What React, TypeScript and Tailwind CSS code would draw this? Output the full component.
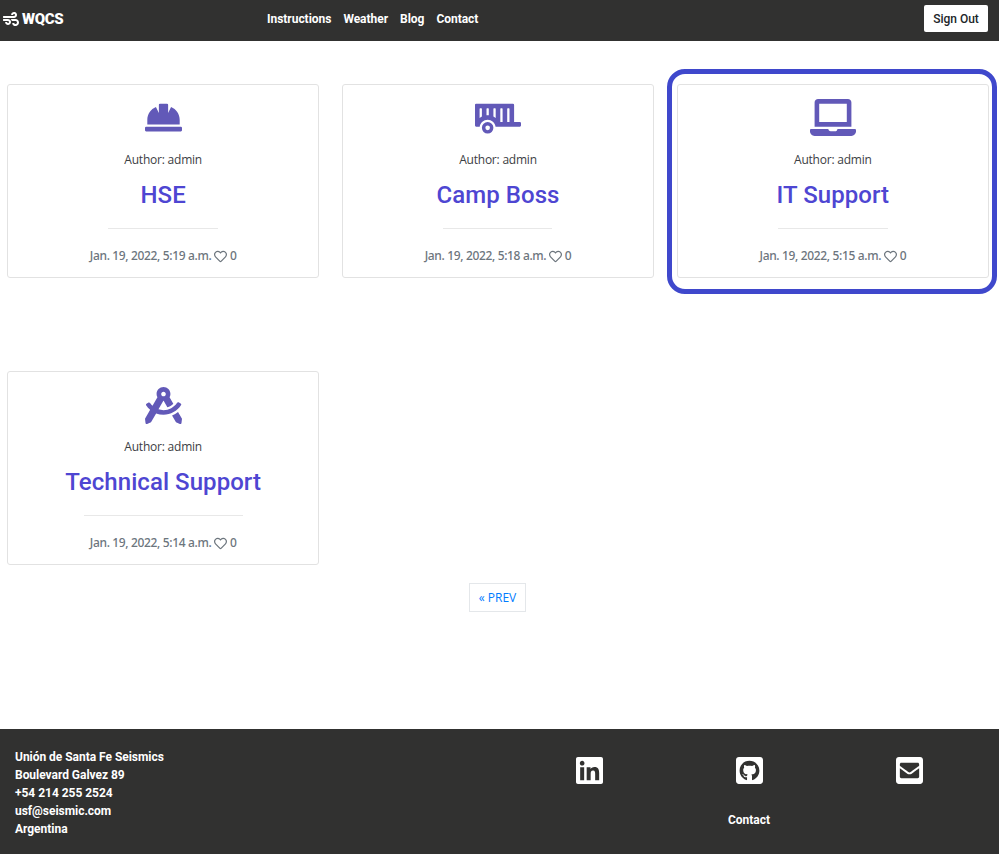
import type { ComponentType } from 'react';
import {
  FaDraftingCompass,
  FaEnvelopeSquare,
  FaGithubSquare,
  FaHardHat,
  FaLaptop,
  FaLinkedin,
  FaRegHeart,
  FaTrailer,
  FaWind,
} from 'react-icons/fa';

type Post = {
  title: string;
  time: string;
  Icon: ComponentType<{ className?: string }>;
  iconClass: string;
  rule: string;
  selected?: boolean;
};

const posts: Post[] = [
  { title: 'HSE', time: '5:19', Icon: FaHardHat, iconClass: 'mt-[14px] mb-[13px] w-[37px]', rule: 'w-[110px]' },
  { title: 'Camp Boss', time: '5:18', Icon: FaTrailer, iconClass: 'mt-[14px] mb-[13px] w-[46px]', rule: 'w-[109px]' },
  { title: 'IT Support', time: '5:15', Icon: FaLaptop, iconClass: 'mt-[14px] mb-[13px] w-[46px]', rule: 'w-[110px]', selected: true },
  { title: 'Technical Support', time: '5:14', Icon: FaDraftingCompass, iconClass: 'mt-[15px] mb-[13px] w-[37px]', rule: 'w-[159px]' },
];

const links = ['Instructions', 'Weather', 'Blog', 'Contact'];

function PostCard({ title, time, Icon, iconClass, rule, selected }: Post) {
  return (
    <article className="relative flex h-[194px] flex-col items-center rounded-[3px] border border-[#e2e2e2] bg-white">
      {selected && (
        <div className="pointer-events-none absolute -top-4 -right-[9px] -bottom-[17px] -left-[11px] rounded-[18px] border-5 border-[#3f48cc]" />
      )}
      <div className="flex h-16 w-full shrink-0 justify-center">
        <Icon className={`h-[37px] text-[#6259b8] ${iconClass}`} />
      </div>
      <p className="font-['Open_Sans','Noto_Sans',sans-serif] text-[12px] leading-[22px] font-normal tracking-[-0.22px] text-[#3c4044]">
        Author: admin
      </p>
      <h2 className="mt-[9px] font-[Roboto,sans-serif] text-[24px] leading-[30px] font-medium tracking-[0.06px] text-[#4e46d2]">
        {title}
      </h2>
      <hr className={`mt-[18px] border-[#e8e8e8] ${rule}`} />
      <p className="mt-4 flex items-center font-['Noto_Sans','Open_Sans',sans-serif] text-[12px] leading-[22px] font-medium tracking-[-0.35px] whitespace-pre text-[#6c757d]">
        <span>Jan. 19, 2022, {time} a.m. </span>
        <FaRegHeart className="size-[13px]" />
        <span> 0</span>
      </p>
    </article>
  );
}

export default function App() {
  return (
    <div className="flex h-[854px] w-[999px] flex-col bg-white font-[Roboto,sans-serif]">
      <header className="flex h-[41px] shrink-0 items-start bg-[#313130] text-white">
        <div className="flex w-[267px] items-center gap-[3px] pt-[7px] pl-[3px] text-[15px] leading-6 font-black tracking-[-0.3px]">
          <FaWind className="size-4" />
          <span>WQCS</span>
        </div>
        <nav className="flex flex-1 gap-3 pt-[9px] text-[12px] leading-5 font-bold tracking-[-0.03px]">
          {links.map((l) => (
            <a key={l}>{l}</a>
          ))}
        </nav>
        <button className="mt-[5px] mr-[11px] h-[27px] w-16 rounded-[2px] bg-white text-[12px] font-medium text-[#212529]">
          Sign Out
        </button>
      </header>

      <main className="flex flex-1 flex-col items-center">
        <div className="mt-[43px] grid w-full grid-cols-3 gap-x-[22.5px] gap-y-[93px] pr-[10px] pl-[7px]">
          {posts.map((p) => (
            <PostCard key={p.title} {...p} />
          ))}
        </div>
        <a className="mt-[18px] mr-[4px] flex h-[29px] w-[57px] items-center justify-center border border-[#e4e7ea] font-['Open_Sans','Noto_Sans',sans-serif] text-[12px] text-[#007bff]">
          « PREV
        </a>
      </main>

      <footer className="flex h-[125px] shrink-0 bg-[#313130] text-[12px] leading-[18px] font-bold text-white">
        <address className="w-[509px] pt-[19px] pl-[15px] tracking-[-0.03px] not-italic">
          <p>Unión de Santa Fe Seismics</p>
          <p>Boulevard Galvez 89</p>
          <p>+54 214 255 2524</p>
          <p>usf@seismic.com</p>
          <p>Argentina</p>
        </address>
        <div className="flex w-[480px] flex-col items-center pt-[26px]">
          <div className="grid w-full grid-cols-3 justify-items-center">
            <FaLinkedin className="h-[31px] w-[27px]" />
            <FaGithubSquare className="h-[31px] w-[27px]" />
            <FaEnvelopeSquare className="h-[31px] w-[27px]" />
          </div>
          <a className="mt-[25px]">Contact</a>
        </div>
      </footer>
    </div>
  );
}
